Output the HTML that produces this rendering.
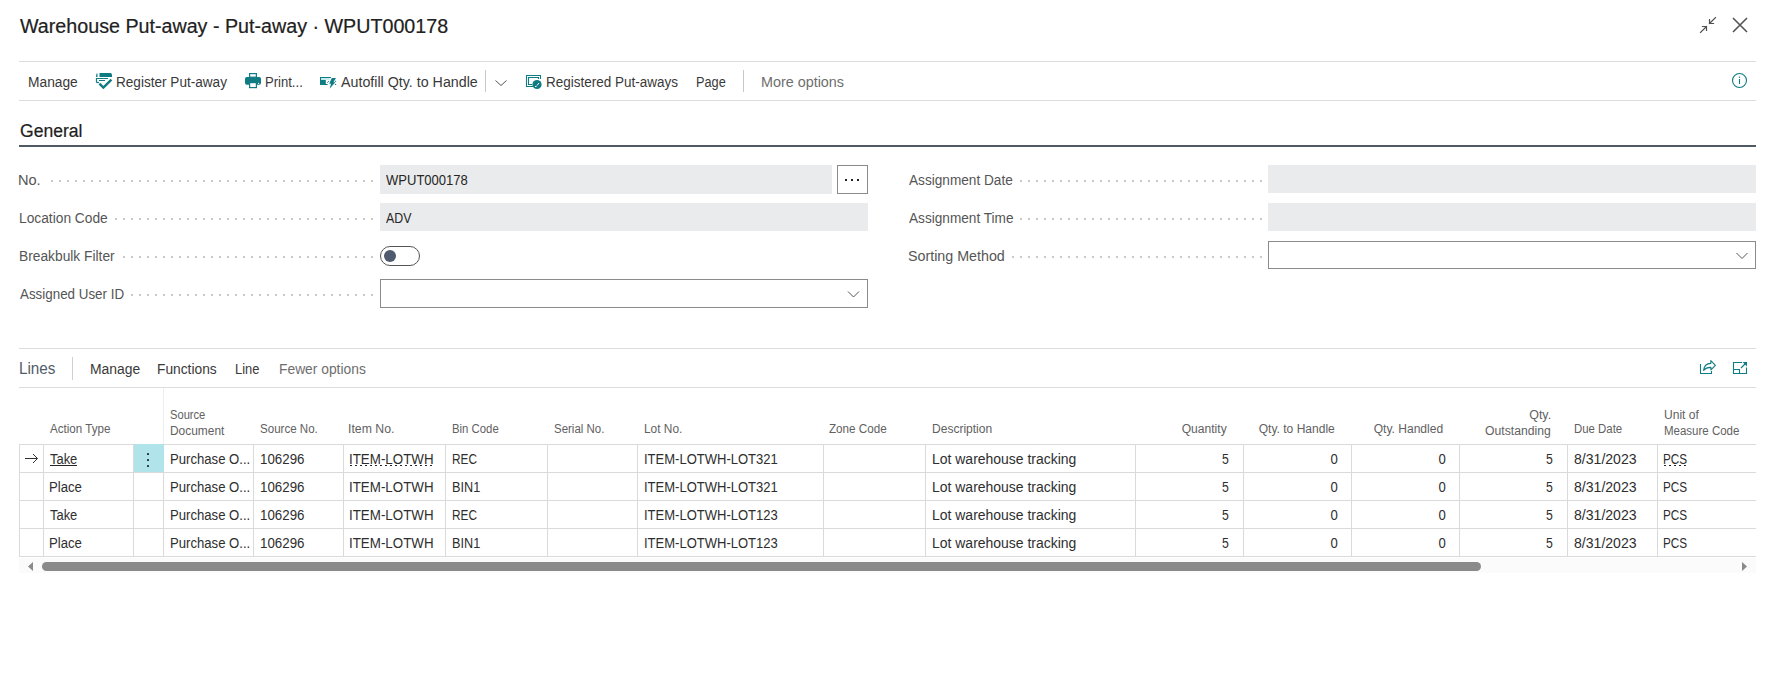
<!DOCTYPE html>
<html><head><meta charset="utf-8"><style>
html,body{margin:0;padding:0;background:#fff;width:1768px;height:693px;overflow:hidden;position:relative;font-family:"Liberation Sans",sans-serif;white-space:nowrap}
span{white-space:nowrap}
</style></head><body>
<svg style="position:absolute;left:0;top:0" width="1768" height="693" viewBox="0 0 1768 693">
<g stroke="#505050" stroke-width="1.2" fill="none" stroke-linecap="square">
<path d="M1700.5 32.5 L1706.5 26.5 M1702.5 26.5 H1706.5 V30.5"/>
<path d="M1715.5 17.5 L1709.5 23.5 M1709.5 19.5 V23.5 H1713.5"/>
</g>
<g stroke="#555" stroke-width="1.6" fill="none">
<path d="M1733 18 L1747 32 M1747 18 L1733 32"/>
</g>
</svg>
<div style="position:absolute;left:19px;top:61px;width:1737px;height:1px;background:#dcdcdc"></div>
<div style="position:absolute;left:19px;top:100px;width:1737px;height:1px;background:#dcdcdc"></div>
<div style="position:absolute;left:485px;top:70px;width:1px;height:22px;background:#c8c8c8"></div>
<div style="position:absolute;left:743px;top:70px;width:1px;height:22px;background:#c8c8c8"></div>
<svg style="position:absolute;left:0;top:0" width="1768" height="693" viewBox="0 0 1768 693">
<!-- register -->
<g fill="#0f7b83">
<path d="M99.5 73 H111 L112 74.5 V77 H99.5 Z"/>
<path d="M96.5 73.5 L97.5 73.5 L97.5 77 H96 Z"/>
</g>
<g fill="none" stroke="#0f7b83">
<path d="M96.5 82.5 V78.5 H108" stroke-width="1.2"/>
<path d="M99 80.5 H105" stroke-width="1"/>
<path d="M96.5 82.5 H99" stroke-width="1.2"/>
<path d="M99.4 83.6 L103.4 87.6 L111.4 79.6" stroke-width="2.4"/>
</g>
<!-- print -->
<rect x="245" y="77" width="16" height="7.8" rx="1.8" fill="#0f7b83"/>
<rect x="249.6" y="73.6" width="6.8" height="3.6" fill="#fff" stroke="#0f7b83" stroke-width="1.2"/>
<rect x="249.6" y="82.6" width="6.8" height="5" fill="#fff" stroke="#0f7b83" stroke-width="1.2"/>
<circle cx="258.6" cy="83.4" r="0.6" fill="#fff"/>
<!-- autofill -->
<path d="M320 76.9 H331 V78 H321.2 V79.8 H325.8 V83.9 H327.6 V85 H320 Z" fill="#0f7b83"/>
<rect x="321.2" y="78" width="8.5" height="1.8" fill="#c4ecef"/>
<path d="M327.3 82.6 L328.9 81.1" stroke="#0f7b83" stroke-width="1"/>
<path d="M331.8 78 H336 L333.4 82.3 H335.4 L329.5 88.7 L331.1 83.7 H329.2 Z" fill="#0f7b83"/>
<circle cx="335.6" cy="81.3" r="0.6" fill="#0f7b83"/>
<circle cx="335.6" cy="84.4" r="0.6" fill="#0f7b83"/>
<!-- registered -->
<g fill="none" stroke="#0f7b83" stroke-width="1.1">
<path d="M533.5 86.5 H526.5 V75.5 H540.5 V79"/>
<path d="M532 84.5 H528.5 V77.5 H538.5 V79"/>
</g>
<circle cx="537" cy="84.5" r="4.6" fill="#0f7b83"/>
<path d="M535 86.5 H536.5 M537 85.5 L539 83" stroke="#fff" stroke-width="1" fill="none"/>
<!-- chevron -->
<path d="M495.5 80.5 L501 85.5 L506.5 80.5" stroke="#555" stroke-width="1" fill="none"/>
<!-- info -->
<circle cx="1739.5" cy="80.5" r="7" stroke="#0f7b83" stroke-width="1.1" fill="none"/>
<path d="M1739.5 79 V84" stroke="#0f7b83" stroke-width="1.1"/>
<circle cx="1739.5" cy="77.3" r="0.7" fill="#0f7b83"/>
</svg>
<div style="position:absolute;left:19px;top:145px;width:1737px;height:2px;background:#505a64"></div>
<div style="position:absolute;left:43px;top:180px;width:336px;height:2px;background-image:linear-gradient(90deg,#c9c9c9 2px,transparent 2px);background-size:8px 2px"></div>
<div style="position:absolute;left:43px;top:218px;width:336px;height:2px;background-image:linear-gradient(90deg,#c9c9c9 2px,transparent 2px);background-size:8px 2px"></div>
<div style="position:absolute;left:43px;top:256px;width:336px;height:2px;background-image:linear-gradient(90deg,#c9c9c9 2px,transparent 2px);background-size:8px 2px"></div>
<div style="position:absolute;left:43px;top:294px;width:336px;height:2px;background-image:linear-gradient(90deg,#c9c9c9 2px,transparent 2px);background-size:8px 2px"></div>
<div style="position:absolute;left:932px;top:180px;width:336px;height:2px;background-image:linear-gradient(90deg,#c9c9c9 2px,transparent 2px);background-size:8px 2px"></div>
<div style="position:absolute;left:932px;top:218px;width:336px;height:2px;background-image:linear-gradient(90deg,#c9c9c9 2px,transparent 2px);background-size:8px 2px"></div>
<div style="position:absolute;left:932px;top:256px;width:336px;height:2px;background-image:linear-gradient(90deg,#c9c9c9 2px,transparent 2px);background-size:8px 2px"></div>
<div style="position:absolute;left:380px;top:165px;width:452px;height:29px;background:#eaebec"></div>
<div style="position:absolute;left:837px;top:165px;width:29px;height:27px;border:1px solid #8a8a8a;background:#fff"></div>
<div style="position:absolute;left:845px;top:179px;width:2px;height:2px;background:#222"></div><div style="position:absolute;left:851px;top:179px;width:2px;height:2px;background:#222"></div><div style="position:absolute;left:857px;top:179px;width:2px;height:2px;background:#222"></div>
<div style="position:absolute;left:380px;top:203px;width:488px;height:28px;background:#eaebec"></div>
<div style="position:absolute;left:380px;top:246px;width:38px;height:18px;border:1px solid #555;border-radius:10px;background:#fff"></div>
<div style="position:absolute;left:384px;top:250px;width:12px;height:12px;border-radius:6px;background:#505a6e"></div>
<div style="position:absolute;left:380px;top:279px;width:486px;height:27px;border:1px solid #8a8a8a;background:#fff"></div>
<div style="position:absolute;left:1268px;top:165px;width:488px;height:28px;background:#eaebec"></div>
<div style="position:absolute;left:1268px;top:203px;width:488px;height:28px;background:#eaebec"></div>
<div style="position:absolute;left:1268px;top:241px;width:486px;height:26px;border:1px solid #8a8a8a;background:#fff"></div>
<svg style="position:absolute;left:0;top:0" width="1768" height="693" viewBox="0 0 1768 693">
<path d="M848 291.5 L853.5 297 L859 291.5" stroke="#555" stroke-width="1" fill="none"/>
<path d="M1736.5 253 L1742 258.5 L1747.5 253" stroke="#555" stroke-width="1" fill="none"/>
</svg>
<div style="position:absolute;left:19px;top:348px;width:1737px;height:1px;background:#dcdcdc"></div>
<div style="position:absolute;left:19px;top:387px;width:1737px;height:1px;background:#dcdcdc"></div>
<div style="position:absolute;left:72px;top:357px;width:1px;height:23px;background:#d0d0d0"></div>
<svg style="position:absolute;left:0;top:0" width="1768" height="693" viewBox="0 0 1768 693">
<g fill="none" stroke="#0f7b83" stroke-width="1.1">
<path d="M1700.5 364 V373.5 H1711.5 V371"/>
<path d="M1703.6 370.3 C1704 366.2 1707 363.6 1710.8 363.4 V360.6 L1715.4 365.3 L1710.9 369.8 V367.4 C1707.6 367.3 1705.2 368.4 1703.6 370.3 Z" stroke-linejoin="round"/>
<path d="M1746.5 367.5 V373.5 H1733.5 V362.5 H1742"/>
<path d="M1733.5 369.5 H1739.5 V373.5"/>
<path d="M1741 368 L1745 364"/>
</g><path d="M1742.5 362 H1747 V366.5 Z" fill="#0f7b83"/><g>
</g>
</svg>
<div style="position:absolute;left:19px;top:444px;width:1737px;height:1px;background:#dadada"></div>
<div style="position:absolute;left:19px;top:472px;width:1737px;height:1px;background:#dadada"></div>
<div style="position:absolute;left:19px;top:500px;width:1737px;height:1px;background:#dadada"></div>
<div style="position:absolute;left:19px;top:528px;width:1737px;height:1px;background:#dadada"></div>
<div style="position:absolute;left:19px;top:556px;width:1737px;height:1px;background:#dadada"></div>
<div style="position:absolute;left:19px;top:444px;width:1px;height:113px;background:#dadada"></div>
<div style="position:absolute;left:43px;top:444px;width:1px;height:113px;background:#dadada"></div>
<div style="position:absolute;left:133px;top:444px;width:1px;height:113px;background:#dadada"></div>
<div style="position:absolute;left:163px;top:444px;width:1px;height:113px;background:#dadada"></div>
<div style="position:absolute;left:253px;top:444px;width:1px;height:113px;background:#dadada"></div>
<div style="position:absolute;left:343px;top:444px;width:1px;height:113px;background:#dadada"></div>
<div style="position:absolute;left:445px;top:444px;width:1px;height:113px;background:#dadada"></div>
<div style="position:absolute;left:547px;top:444px;width:1px;height:113px;background:#dadada"></div>
<div style="position:absolute;left:637px;top:444px;width:1px;height:113px;background:#dadada"></div>
<div style="position:absolute;left:823px;top:444px;width:1px;height:113px;background:#dadada"></div>
<div style="position:absolute;left:925px;top:444px;width:1px;height:113px;background:#dadada"></div>
<div style="position:absolute;left:1135px;top:444px;width:1px;height:113px;background:#dadada"></div>
<div style="position:absolute;left:1243px;top:444px;width:1px;height:113px;background:#dadada"></div>
<div style="position:absolute;left:1351px;top:444px;width:1px;height:113px;background:#dadada"></div>
<div style="position:absolute;left:1459px;top:444px;width:1px;height:113px;background:#dadada"></div>
<div style="position:absolute;left:1567px;top:444px;width:1px;height:113px;background:#dadada"></div>
<div style="position:absolute;left:1657px;top:444px;width:1px;height:113px;background:#dadada"></div>
<div style="position:absolute;left:163px;top:388px;width:1px;height:56px;background:#efefef"></div>
<div style="position:absolute;left:134px;top:444px;width:30px;height:28px;background:#b0e3ea"></div>
<div style="position:absolute;left:147.2px;top:453.2px;width:1.7px;height:1.7px;border-radius:0.4px;background:#1d2b38"></div>
<div style="position:absolute;left:147.2px;top:459.2px;width:1.7px;height:1.7px;border-radius:0.4px;background:#1d2b38"></div>
<div style="position:absolute;left:147.2px;top:465.2px;width:1.7px;height:1.7px;border-radius:0.4px;background:#1d2b38"></div>
<svg style="position:absolute;left:0;top:0" width="1768" height="693" viewBox="0 0 1768 693">
<path d="M25 458.5 H37.5 M33 454 L37.5 458.5 L33 463" stroke="#333" stroke-width="1" fill="none"/>
</svg>
<div style="position:absolute;left:50px;top:465px;width:27px;height:1px;background:#262626"></div>
<div style="position:absolute;left:350px;top:465px;width:84px;height:1px;background-image:linear-gradient(90deg,#262626 2.5px,transparent 2.5px);background-size:5px 1px"></div>
<div style="position:absolute;left:1664px;top:465px;width:24px;height:1px;background-image:linear-gradient(90deg,#262626 2.5px,transparent 2.5px);background-size:5px 1px"></div>
<div style="position:absolute;left:19px;top:558px;width:1737px;height:15px;background:#fbfbfb"></div>
<div style="position:absolute;left:42px;top:562px;width:1439px;height:9px;border-radius:4.5px;background:#8a8a8a"></div>
<svg style="position:absolute;left:0;top:0" width="1768" height="693" viewBox="0 0 1768 693">
<path d="M28 566.5 L33 562 V571 Z" fill="#8a8a8a"/>
<path d="M1747 566.5 L1742 562 V571 Z" fill="#8a8a8a"/>
</svg>
<span style="position:absolute;left:19.50px;top:16.07px;font-size:20px;line-height:20px;color:#212121;transform:scaleX(0.9842);transform-origin:left center;-webkit-text-stroke:0.2px #212121;">Warehouse Put-away - Put-away · WPUT000178</span>
<span style="position:absolute;left:28.02px;top:75.15px;font-size:14px;line-height:14px;color:#393939;transform:scaleX(0.9838);transform-origin:left center;">Manage</span>
<span style="position:absolute;left:116.03px;top:75.15px;font-size:14px;line-height:14px;color:#393939;transform:scaleX(0.9702);transform-origin:left center;">Register Put-away</span>
<span style="position:absolute;left:265.07px;top:75.15px;font-size:14px;line-height:14px;color:#393939;transform:scaleX(0.9335);transform-origin:left center;">Print...</span>
<span style="position:absolute;left:340.60px;top:75.15px;font-size:14px;line-height:14px;color:#393939;transform:scaleX(1.0180);transform-origin:left center;">Autofill Qty. to Handle</span>
<span style="position:absolute;left:545.84px;top:75.15px;font-size:14px;line-height:14px;color:#393939;transform:scaleX(0.9636);transform-origin:left center;">Registered Put-aways</span>
<span style="position:absolute;left:696.09px;top:75.15px;font-size:14px;line-height:14px;color:#393939;transform:scaleX(0.9088);transform-origin:left center;">Page</span>
<span style="position:absolute;left:761.27px;top:75.15px;font-size:14px;line-height:14px;color:#6e6e6e;transform:scaleX(1.0259);transform-origin:left center;">More options</span>
<span style="position:absolute;left:19.50px;top:121.76px;font-size:18px;line-height:18px;color:#212121;transform:scaleX(0.9756);transform-origin:left center;-webkit-text-stroke:0.2px #212121;">General</span>
<span style="position:absolute;left:18.46px;top:173.15px;font-size:14px;line-height:14px;color:#555555;transform:scaleX(1.0404);transform-origin:left center;background:#fff;padding-right:6px;">No.</span>
<span style="position:absolute;left:18.52px;top:211.15px;font-size:14px;line-height:14px;color:#555555;transform:scaleX(0.9832);transform-origin:left center;background:#fff;padding-right:6px;">Location Code</span>
<span style="position:absolute;left:18.52px;top:249.15px;font-size:14px;line-height:14px;color:#555555;transform:scaleX(0.9835);transform-origin:left center;background:#fff;padding-right:6px;">Breakbulk Filter</span>
<span style="position:absolute;left:19.50px;top:287.15px;font-size:14px;line-height:14px;color:#555555;transform:scaleX(0.9557);transform-origin:left center;background:#fff;padding-right:6px;">Assigned User ID</span>
<span style="position:absolute;left:908.50px;top:173.15px;font-size:14px;line-height:14px;color:#555555;transform:scaleX(0.9736);transform-origin:left center;background:#fff;padding-right:6px;">Assignment Date</span>
<span style="position:absolute;left:908.50px;top:211.15px;font-size:14px;line-height:14px;color:#555555;transform:scaleX(0.9737);transform-origin:left center;background:#fff;padding-right:6px;">Assignment Time</span>
<span style="position:absolute;left:907.50px;top:249.15px;font-size:14px;line-height:14px;color:#555555;transform:scaleX(1.0196);transform-origin:left center;background:#fff;padding-right:6px;">Sorting Method</span>
<span style="position:absolute;left:385.60px;top:173.15px;font-size:14px;line-height:14px;color:#262626;transform:scaleX(0.9303);transform-origin:left center;">WPUT000178</span>
<span style="position:absolute;left:385.60px;top:211.15px;font-size:14px;line-height:14px;color:#262626;transform:scaleX(0.8829);transform-origin:left center;">ADV</span>
<span style="position:absolute;left:19.05px;top:361.46px;font-size:16px;line-height:16px;color:#505c6a;transform:scaleX(0.9530);transform-origin:left center;">Lines</span>
<span style="position:absolute;left:89.51px;top:362.15px;font-size:14px;line-height:14px;color:#393939;transform:scaleX(0.9938);transform-origin:left center;">Manage</span>
<span style="position:absolute;left:157.32px;top:362.15px;font-size:14px;line-height:14px;color:#393939;transform:scaleX(0.9833);transform-origin:left center;">Functions</span>
<span style="position:absolute;left:235.38px;top:362.15px;font-size:14px;line-height:14px;color:#393939;transform:scaleX(0.9228);transform-origin:left center;">Line</span>
<span style="position:absolute;left:278.61px;top:362.15px;font-size:14px;line-height:14px;color:#6e6e6e;transform:scaleX(0.9870);transform-origin:left center;">Fewer options</span>
<span style="position:absolute;left:49.50px;top:422.84px;font-size:12px;line-height:12px;color:#616161;transform:scaleX(0.9678);transform-origin:left center;">Action Type</span>
<span style="position:absolute;left:169.50px;top:408.84px;font-size:12px;line-height:12px;color:#616161;transform:scaleX(0.9283);transform-origin:left center;">Source</span>
<span style="position:absolute;left:169.50px;top:424.84px;font-size:12px;line-height:12px;color:#616161;transform:scaleX(0.9935);transform-origin:left center;">Document</span>
<span style="position:absolute;left:259.80px;top:422.84px;font-size:12px;line-height:12px;color:#616161;transform:scaleX(0.9632);transform-origin:left center;">Source No.</span>
<span style="position:absolute;left:348.48px;top:422.84px;font-size:12px;line-height:12px;color:#616161;transform:scaleX(1.0225);transform-origin:left center;">Item No.</span>
<span style="position:absolute;left:451.60px;top:422.84px;font-size:12px;line-height:12px;color:#616161;transform:scaleX(0.9458);transform-origin:left center;">Bin Code</span>
<span style="position:absolute;left:553.50px;top:422.84px;font-size:12px;line-height:12px;color:#616161;transform:scaleX(0.9550);transform-origin:left center;">Serial No.</span>
<span style="position:absolute;left:643.60px;top:422.84px;font-size:12px;line-height:12px;color:#616161;transform:scaleX(0.9907);transform-origin:left center;">Lot No.</span>
<span style="position:absolute;left:829.00px;top:422.84px;font-size:12px;line-height:12px;color:#616161;transform:scaleX(0.9715);transform-origin:left center;">Zone Code</span>
<span style="position:absolute;left:931.80px;top:422.84px;font-size:12px;line-height:12px;color:#616161;transform:scaleX(1.0025);transform-origin:left center;">Description</span>
<span style="position:absolute;right:541.20px;top:422.84px;font-size:12px;line-height:12px;color:#616161;transform:scaleX(1.0069);transform-origin:right center;">Quantity</span>
<span style="position:absolute;right:433.33px;top:422.84px;font-size:12px;line-height:12px;color:#616161;transform:scaleX(1.0034);transform-origin:right center;">Qty. to Handle</span>
<span style="position:absolute;right:324.62px;top:422.84px;font-size:12px;line-height:12px;color:#616161;transform:scaleX(1.0048);transform-origin:right center;">Qty. Handled</span>
<span style="position:absolute;right:216.45px;top:408.84px;font-size:12px;line-height:12px;color:#616161;transform:scaleX(1.0348);transform-origin:right center;">Qty.</span>
<span style="position:absolute;right:217.02px;top:424.84px;font-size:12px;line-height:12px;color:#616161;transform:scaleX(1.0150);transform-origin:right center;">Outstanding</span>
<span style="position:absolute;left:1573.80px;top:422.84px;font-size:12px;line-height:12px;color:#616161;transform:scaleX(0.9506);transform-origin:left center;">Due Date</span>
<span style="position:absolute;left:1663.70px;top:408.84px;font-size:12px;line-height:12px;color:#616161;transform:scaleX(1.0043);transform-origin:left center;">Unit of</span>
<span style="position:absolute;left:1663.70px;top:424.84px;font-size:12px;line-height:12px;color:#616161;transform:scaleX(0.9578);transform-origin:left center;">Measure Code</span>
<span style="position:absolute;left:50.20px;top:451.65px;font-size:14px;line-height:14px;color:#2e2e2e;transform:scaleX(0.9232);transform-origin:left center;">Take</span>
<span style="position:absolute;left:169.56px;top:451.65px;font-size:14px;line-height:14px;color:#2e2e2e;transform:scaleX(0.9378);transform-origin:left center;">Purchase O...</span>
<span style="position:absolute;left:260.25px;top:451.65px;font-size:14px;line-height:14px;color:#2e2e2e;transform:scaleX(0.9514);transform-origin:left center;">106296</span>
<span style="position:absolute;left:349.35px;top:451.65px;font-size:14px;line-height:14px;color:#2e2e2e;transform:scaleX(0.9533);transform-origin:left center;">ITEM-LOTWH</span>
<span style="position:absolute;left:451.86px;top:451.65px;font-size:14px;line-height:14px;color:#2e2e2e;transform:scaleX(0.8436);transform-origin:left center;">REC</span>
<span style="position:absolute;left:643.57px;top:451.65px;font-size:14px;line-height:14px;color:#2e2e2e;transform:scaleX(0.9293);transform-origin:left center;">ITEM-LOTWH-LOT321</span>
<span style="position:absolute;left:931.70px;top:451.65px;font-size:14px;line-height:14px;color:#2e2e2e;transform:scaleX(0.9974);transform-origin:left center;">Lot warehouse tracking</span>
<span style="position:absolute;right:539.19px;top:451.65px;font-size:14px;line-height:14px;color:#2e2e2e;transform:scaleX(0.8750);transform-origin:right center;">5</span>
<span style="position:absolute;right:430.70px;top:451.65px;font-size:14px;line-height:14px;color:#2e2e2e;transform:scaleX(0.9375);transform-origin:right center;">0</span>
<span style="position:absolute;right:322.70px;top:451.65px;font-size:14px;line-height:14px;color:#2e2e2e;transform:scaleX(0.9375);transform-origin:right center;">0</span>
<span style="position:absolute;right:214.89px;top:451.65px;font-size:14px;line-height:14px;color:#2e2e2e;transform:scaleX(0.8750);transform-origin:right center;">5</span>
<span style="position:absolute;left:1574.30px;top:451.65px;font-size:14px;line-height:14px;color:#2e2e2e;transform:scaleX(1.0049);transform-origin:left center;">8/31/2023</span>
<span style="position:absolute;left:1663.46px;top:451.65px;font-size:14px;line-height:14px;color:#2e2e2e;transform:scaleX(0.8379);transform-origin:left center;">PCS</span>
<span style="position:absolute;left:49.26px;top:479.65px;font-size:14px;line-height:14px;color:#2e2e2e;transform:scaleX(0.9406);transform-origin:left center;">Place</span>
<span style="position:absolute;left:169.56px;top:479.65px;font-size:14px;line-height:14px;color:#2e2e2e;transform:scaleX(0.9378);transform-origin:left center;">Purchase O...</span>
<span style="position:absolute;left:260.25px;top:479.65px;font-size:14px;line-height:14px;color:#2e2e2e;transform:scaleX(0.9514);transform-origin:left center;">106296</span>
<span style="position:absolute;left:349.35px;top:479.65px;font-size:14px;line-height:14px;color:#2e2e2e;transform:scaleX(0.9533);transform-origin:left center;">ITEM-LOTWH</span>
<span style="position:absolute;left:451.79px;top:479.65px;font-size:14px;line-height:14px;color:#2e2e2e;transform:scaleX(0.9065);transform-origin:left center;">BIN1</span>
<span style="position:absolute;left:643.57px;top:479.65px;font-size:14px;line-height:14px;color:#2e2e2e;transform:scaleX(0.9293);transform-origin:left center;">ITEM-LOTWH-LOT321</span>
<span style="position:absolute;left:931.70px;top:479.65px;font-size:14px;line-height:14px;color:#2e2e2e;transform:scaleX(0.9974);transform-origin:left center;">Lot warehouse tracking</span>
<span style="position:absolute;right:539.19px;top:479.65px;font-size:14px;line-height:14px;color:#2e2e2e;transform:scaleX(0.8750);transform-origin:right center;">5</span>
<span style="position:absolute;right:430.70px;top:479.65px;font-size:14px;line-height:14px;color:#2e2e2e;transform:scaleX(0.9375);transform-origin:right center;">0</span>
<span style="position:absolute;right:322.70px;top:479.65px;font-size:14px;line-height:14px;color:#2e2e2e;transform:scaleX(0.9375);transform-origin:right center;">0</span>
<span style="position:absolute;right:214.89px;top:479.65px;font-size:14px;line-height:14px;color:#2e2e2e;transform:scaleX(0.8750);transform-origin:right center;">5</span>
<span style="position:absolute;left:1574.30px;top:479.65px;font-size:14px;line-height:14px;color:#2e2e2e;transform:scaleX(1.0049);transform-origin:left center;">8/31/2023</span>
<span style="position:absolute;left:1663.46px;top:479.65px;font-size:14px;line-height:14px;color:#2e2e2e;transform:scaleX(0.8379);transform-origin:left center;">PCS</span>
<span style="position:absolute;left:50.20px;top:507.65px;font-size:14px;line-height:14px;color:#2e2e2e;transform:scaleX(0.9232);transform-origin:left center;">Take</span>
<span style="position:absolute;left:169.56px;top:507.65px;font-size:14px;line-height:14px;color:#2e2e2e;transform:scaleX(0.9378);transform-origin:left center;">Purchase O...</span>
<span style="position:absolute;left:260.25px;top:507.65px;font-size:14px;line-height:14px;color:#2e2e2e;transform:scaleX(0.9514);transform-origin:left center;">106296</span>
<span style="position:absolute;left:349.35px;top:507.65px;font-size:14px;line-height:14px;color:#2e2e2e;transform:scaleX(0.9533);transform-origin:left center;">ITEM-LOTWH</span>
<span style="position:absolute;left:451.86px;top:507.65px;font-size:14px;line-height:14px;color:#2e2e2e;transform:scaleX(0.8436);transform-origin:left center;">REC</span>
<span style="position:absolute;left:643.57px;top:507.65px;font-size:14px;line-height:14px;color:#2e2e2e;transform:scaleX(0.9293);transform-origin:left center;">ITEM-LOTWH-LOT123</span>
<span style="position:absolute;left:931.70px;top:507.65px;font-size:14px;line-height:14px;color:#2e2e2e;transform:scaleX(0.9974);transform-origin:left center;">Lot warehouse tracking</span>
<span style="position:absolute;right:539.19px;top:507.65px;font-size:14px;line-height:14px;color:#2e2e2e;transform:scaleX(0.8750);transform-origin:right center;">5</span>
<span style="position:absolute;right:430.70px;top:507.65px;font-size:14px;line-height:14px;color:#2e2e2e;transform:scaleX(0.9375);transform-origin:right center;">0</span>
<span style="position:absolute;right:322.70px;top:507.65px;font-size:14px;line-height:14px;color:#2e2e2e;transform:scaleX(0.9375);transform-origin:right center;">0</span>
<span style="position:absolute;right:214.89px;top:507.65px;font-size:14px;line-height:14px;color:#2e2e2e;transform:scaleX(0.8750);transform-origin:right center;">5</span>
<span style="position:absolute;left:1574.30px;top:507.65px;font-size:14px;line-height:14px;color:#2e2e2e;transform:scaleX(1.0049);transform-origin:left center;">8/31/2023</span>
<span style="position:absolute;left:1663.46px;top:507.65px;font-size:14px;line-height:14px;color:#2e2e2e;transform:scaleX(0.8379);transform-origin:left center;">PCS</span>
<span style="position:absolute;left:49.26px;top:535.65px;font-size:14px;line-height:14px;color:#2e2e2e;transform:scaleX(0.9406);transform-origin:left center;">Place</span>
<span style="position:absolute;left:169.56px;top:535.65px;font-size:14px;line-height:14px;color:#2e2e2e;transform:scaleX(0.9378);transform-origin:left center;">Purchase O...</span>
<span style="position:absolute;left:260.25px;top:535.65px;font-size:14px;line-height:14px;color:#2e2e2e;transform:scaleX(0.9514);transform-origin:left center;">106296</span>
<span style="position:absolute;left:349.35px;top:535.65px;font-size:14px;line-height:14px;color:#2e2e2e;transform:scaleX(0.9533);transform-origin:left center;">ITEM-LOTWH</span>
<span style="position:absolute;left:451.79px;top:535.65px;font-size:14px;line-height:14px;color:#2e2e2e;transform:scaleX(0.9065);transform-origin:left center;">BIN1</span>
<span style="position:absolute;left:643.57px;top:535.65px;font-size:14px;line-height:14px;color:#2e2e2e;transform:scaleX(0.9293);transform-origin:left center;">ITEM-LOTWH-LOT123</span>
<span style="position:absolute;left:931.70px;top:535.65px;font-size:14px;line-height:14px;color:#2e2e2e;transform:scaleX(0.9974);transform-origin:left center;">Lot warehouse tracking</span>
<span style="position:absolute;right:539.19px;top:535.65px;font-size:14px;line-height:14px;color:#2e2e2e;transform:scaleX(0.8750);transform-origin:right center;">5</span>
<span style="position:absolute;right:430.70px;top:535.65px;font-size:14px;line-height:14px;color:#2e2e2e;transform:scaleX(0.9375);transform-origin:right center;">0</span>
<span style="position:absolute;right:322.70px;top:535.65px;font-size:14px;line-height:14px;color:#2e2e2e;transform:scaleX(0.9375);transform-origin:right center;">0</span>
<span style="position:absolute;right:214.89px;top:535.65px;font-size:14px;line-height:14px;color:#2e2e2e;transform:scaleX(0.8750);transform-origin:right center;">5</span>
<span style="position:absolute;left:1574.30px;top:535.65px;font-size:14px;line-height:14px;color:#2e2e2e;transform:scaleX(1.0049);transform-origin:left center;">8/31/2023</span>
<span style="position:absolute;left:1663.46px;top:535.65px;font-size:14px;line-height:14px;color:#2e2e2e;transform:scaleX(0.8379);transform-origin:left center;">PCS</span>
</body></html>
